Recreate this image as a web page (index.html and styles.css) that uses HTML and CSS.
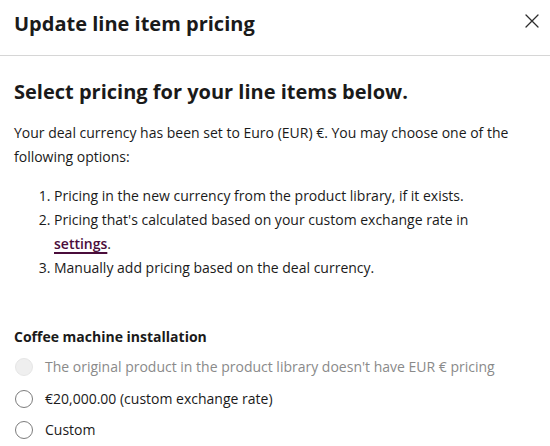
FILE: index.html
```html
<!DOCTYPE html>
<html lang="en">
<head>
<meta charset="utf-8">
<title>Update line item pricing</title>
<link rel="stylesheet" href="styles.css">
</head>
<body>
<div class="modal">
  <header class="modal-header">
    <h1 class="modal-title">Update line item pricing</h1>
    <button class="close" aria-label="Close">
      <svg width="14" height="14" viewBox="0 0 14 14"><path d="M1 1 L13 13 M13 1 L1 13" stroke="#2d2d2d" stroke-width="1.3" fill="none" stroke-linecap="round"/></svg>
    </button>
  </header>
  <main class="modal-body">
    <h2 class="section-title">Select pricing for your line items below.</h2>
    <p class="intro">Your deal currency has been set to Euro (EUR) €. You may choose one of the following options:</p>
    <ol class="options">
      <li>Pricing in the new currency from the product library, if it exists.</li>
      <li>Pricing that's calculated based on your custom exchange rate in <a class="link" href="#">settings</a>.</li>
      <li>Manually add pricing based on the deal currency.</li>
    </ol>
    <h3 class="item-title">Coffee machine installation</h3>
    <div class="radios">
      <label class="radio disabled"><span class="dot"></span><span>The original product in the product library doesn't have EUR € pricing</span></label>
      <label class="radio"><span class="dot"></span><span>€20,000.00 (custom exchange rate)</span></label>
      <label class="radio"><span class="dot"></span><span>Custom</span></label>
    </div>
  </main>
</div>
</body>
</html>
```
FILE: styles.css
```css
* { box-sizing: border-box; }
html, body { margin: 0; padding: 0; background: #fff; }
body {
  font-family: "Open Sans", "Noto Sans", sans-serif;
  color: #1a1a1a;
  width: 550px;
  height: 446px;
  overflow: hidden;
}
.modal-header {
  height: 56px;
  display: flex;
  align-items: flex-start;
  justify-content: space-between;
  padding: 10px 11px 0 14px;
  border-bottom: 1px solid #d6d6d6;
}
.modal-title {
  margin: 0;
  font-size: 20px;
  font-weight: 700;
  line-height: 27px;
  color: #1a1a1a;
}
.close {
  background: none;
  border: 0;
  padding: 0;
  margin-top: 4px;
  width: 14px;
  height: 14px;
  cursor: pointer;
}
.close svg { display: block; }
.modal-body { padding: 22px 28px 0 14px; }
.section-title {
  margin: 0;
  font-size: 20px;
  font-weight: 700;
  line-height: 28px;
  color: #1a1a1a;
}
.intro {
  margin: 15px 0 0 0;
  font-size: 14px;
  line-height: 24px;
}
.options {
  margin: 15px 0 0 0;
  padding-left: 40px;
  font-size: 14px;
  line-height: 24px;
}
.link {
  color: #4a0d3b;
  font-weight: 600;
  text-decoration: underline;
  text-decoration-thickness: 2px;
  text-underline-offset: 3px;
}
.item-title {
  margin: 47px 0 0 0;
  font-size: 14px;
  font-weight: 700;
  line-height: 20px;
}
.radios { display: flex; flex-direction: column; gap: 9.5px; margin-top: 9px; }
.radio {
  display: flex;
  align-items: center;
  gap: 12px;
  font-size: 14px;
  line-height: 22px;
}
.dot {
  width: 18px;
  height: 18px;
  border-radius: 50%;
  border: 1px solid #7c7c7c;
  background: #fff;
  margin-left: 1px;
  flex: none;
}
.radio.disabled { color: #8a8a8a; }
.radio.disabled .dot { border-color: #e6e6e6; background: #efefef; }
```
